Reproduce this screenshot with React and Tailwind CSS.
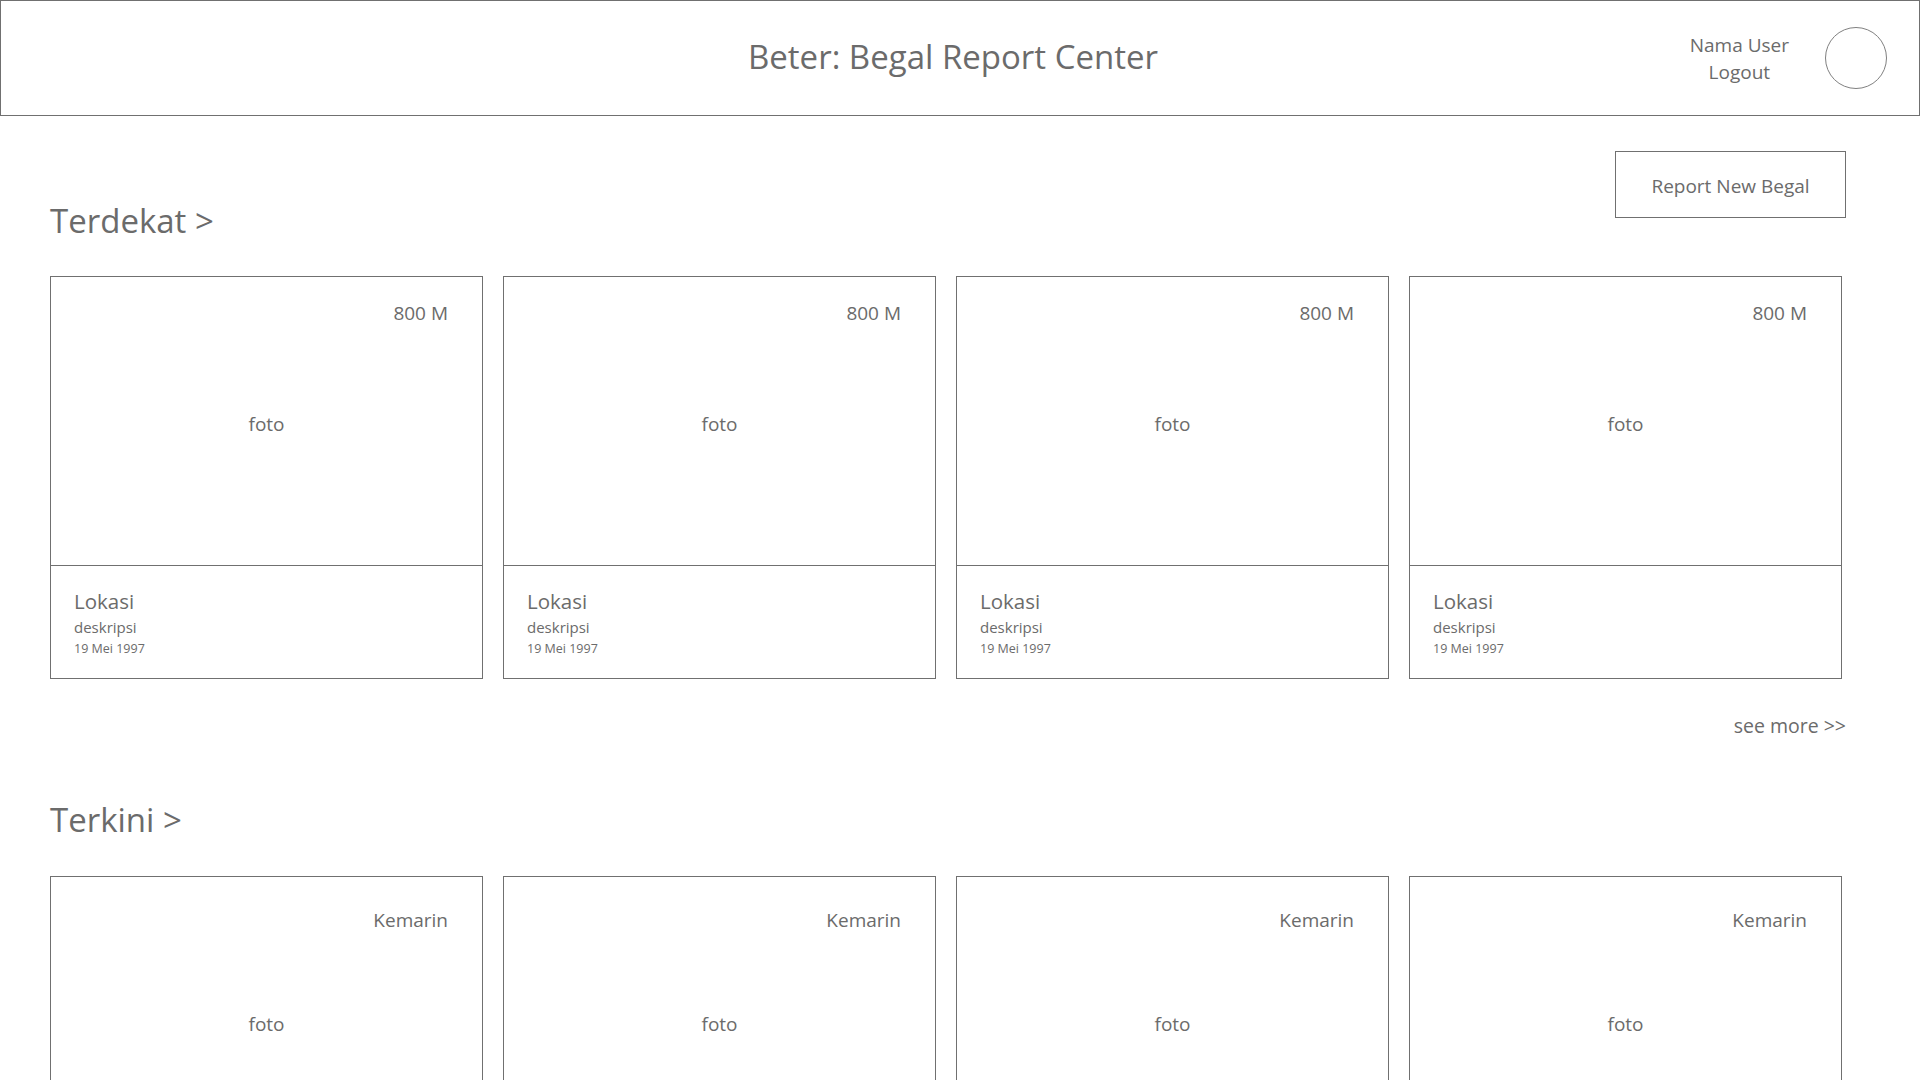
import React from 'react';

const FONT = { fontFamily: '"Segoe UI", "Open Sans", "Noto Sans", sans-serif' };

const nearest = Array.from({ length: 4 }, (_, i) => ({
  id: i,
  tag: '800 M',
  lokasi: 'Lokasi',
  deskripsi: 'deskripsi',
  tanggal: '19 Mei 1997',
}));

const latest = Array.from({ length: 4 }, (_, i) => ({
  id: i,
  tag: 'Kemarin',
  lokasi: 'Lokasi',
  deskripsi: 'deskripsi',
  tanggal: '19 Mei 1997',
}));

const ReportCard = ({ item, tagOffset, fotoOffset }) => (
  <div className="flex h-[403px] flex-col border border-[#707070] bg-white">
    {/* foto area */}
    <div className="flex h-[289px] flex-col border-b border-[#707070]">
      <div className={`flex justify-end pr-[34px] text-[19px] leading-[28px] ${tagOffset}`}>
        {item.tag}
      </div>
      <div className={`flex flex-1 items-center justify-center text-[19px] leading-[28px] ${fotoOffset}`}>
        foto
      </div>
    </div>
    {/* info */}
    <div className="flex flex-col pl-[23px] pt-[23px]">
      <span className="text-[20.5px] leading-[24px]">{item.lokasi}</span>
      <span className="mt-[3px] text-[15px] leading-[22px]">{item.deskripsi}</span>
      <span className="mt-[2px] text-[12.5px] leading-[18px]">{item.tanggal}</span>
    </div>
  </div>
);

const CardRow = ({ items, tagOffset, fotoOffset }) => (
  <div className="grid grid-cols-[repeat(4,433px)] gap-[20px]">
    {items.map((item) => (
      <ReportCard key={item.id} item={item} tagOffset={tagOffset} fotoOffset={fotoOffset} />
    ))}
  </div>
);

export default function App() {
  return (
    <div className="min-h-screen bg-white text-[#6b6b6b]" style={FONT}>
      {/* Header */}
      <header className="grid h-[116px] grid-cols-[1fr_auto_1fr] items-center border border-[#707070]">
        <div />
        <h1 className="mr-[14px] mb-[3px] text-[33px] leading-[40px]">Beter: Begal Report Center</h1>
        <div className="flex items-center justify-end pr-[32px]">
          <div className="flex flex-col items-center pt-[2px] text-[19px] leading-[27px]">
            <span>Nama User</span>
            <span>Logout</span>
          </div>
          <div className="ml-[36px] h-[62px] w-[62px] rounded-full border border-[#808080]" />
        </div>
      </header>

      <main className="ml-[50px] w-[1796px]">
        {/* Terdekat */}
        <div className="mt-[35px] flex items-start justify-between">
          <h2 className="mt-[52px] text-[33px] leading-[36px]">Terdekat &gt;</h2>
          <button className="flex h-[67px] w-[231px] items-center justify-center border border-[#707070] pt-[3px] text-[19px]">
            Report New Begal
          </button>
        </div>
        <div className="mt-[37px]">
          <CardRow items={nearest} tagOffset="pt-[22px]" fotoOffset="pb-[44px]" />
        </div>
        <div className="mt-[35px] flex justify-end text-[19.5px] leading-[24px]">
          see more &gt;&gt;
        </div>

        {/* Terkini */}
        <h2 className="mt-[64px] text-[33px] leading-[36px]">Terkini &gt;</h2>
        <div className="mt-[38px] pb-[60px]">
          <CardRow items={latest} tagOffset="pt-[29px]" fotoOffset="pb-[52px]" />
        </div>
      </main>
    </div>
  );
}
